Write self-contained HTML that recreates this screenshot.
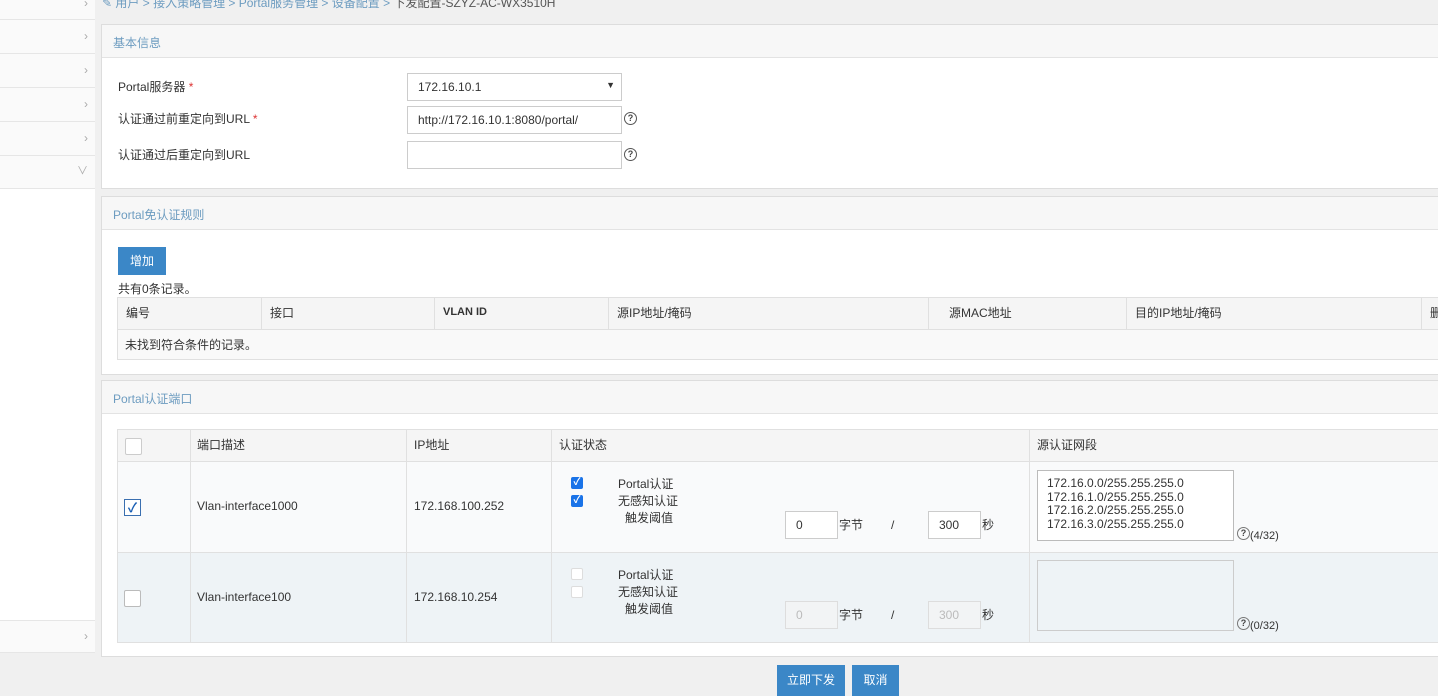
<!DOCTYPE html>
<html><head><meta charset="utf-8"><style>
*{margin:0;padding:0;box-sizing:border-box}
body{width:1438px;height:696px;overflow:hidden;background:#f0f0f0;font-family:"Liberation Sans","Noto Sans CJK SC",sans-serif;font-size:12px;color:#333;position:relative}
.a{position:absolute}
.row{left:0;width:95px;height:34px;background:#fafafa;border-bottom:1px solid #e6e6e6}
.chev{position:absolute;right:7px;top:10px;color:#aaa;font-size:12px}
.panel{background:#fff;border:1px solid #ddd;left:101px;width:1345px}
.ph{position:absolute;left:0;right:0;top:0;height:33px;background:#f7f7f7;border-bottom:1px solid #e3e3e3;color:#6d9cc0;font-size:12px;padding:9px 11px}
.lbl{font-size:12px;color:#333}
.inp{background:#fff;border:1px solid #ccc;height:28px;font-size:12px;padding:6px 10px;color:#333}
.q{width:13px;height:13px;border:1px solid #555;border-radius:50%;font-size:9px;line-height:11px;text-align:center;color:#444;font-weight:bold}
.btn{background:#3b87c7;color:#fff;text-align:center;font-size:12px}
.th{background:#f5f5f5;border:1px solid #e0e0e0;height:33px}
.cl{position:absolute;top:0;bottom:0;border-left:1px solid #e0e0e0}
.cb{width:14px;height:14px;border:1px solid #aaa;background:#fff;border-radius:2px}
.cbb{width:12px;height:12px;background:#1a73e8;border-radius:2px;color:#fff;font-size:10px;line-height:12px;text-align:center;font-weight:bold}
</style></head><body>
<div class="a" style="left:0;top:0;width:95px;height:652px;background:#fff"></div>
<div class="a row" style="top:-14px"><span class="chev">&#8250;</span></div>
<div class="a row" style="top:20px;"><span class="chev" style="top:9px">&#8250;</span></div>
<div class="a row" style="top:54px"><span class="chev" style="top:9px">&#8250;</span></div>
<div class="a row" style="top:88px"><span class="chev" style="top:9px">&#8250;</span></div>
<div class="a row" style="top:122px"><span class="chev" style="top:9px">&#8250;</span></div>
<div class="a row" style="top:155px;border-top:1px solid #e6e6e6"><span class="chev" style="top:6px;font-size:11px">&#8744;</span></div>
<div class="a row" style="top:620px;height:33px;border-top:1px solid #e6e6e6"><span class="chev" style="top:8px">&#8250;</span></div>

<div class="a" style="left:102px;top:-6px;color:#6d9cc0;font-size:12px">&#9998; 用户 &gt; 接入策略管理 &gt; Portal服务管理 &gt; 设备配置 &gt; <span style="color:#555">下发配置-SZYZ-AC-WX3510H</span></div>

<div class="a panel" style="top:24px;height:165px">
<div class="ph">基本信息</div>
<div class="a lbl" style="left:16px;top:53px">Portal服务器 <span style="color:#d33">*</span></div>
<div class="a lbl" style="left:16px;top:85px">认证通过前重定向到URL <span style="color:#d33">*</span></div>
<div class="a lbl" style="left:16px;top:121px">认证通过后重定向到URL</div>
<div class="a inp" style="left:305px;top:48px;width:215px">172.16.10.1<span style="position:absolute;right:6px;top:6px;font-size:9px">&#9660;</span></div>
<div class="a inp" style="left:305px;top:81px;width:215px">http://172.16.10.1:8080/portal/</div>
<div class="a q" style="left:522px;top:87px">?</div>
<div class="a inp" style="left:305px;top:116px;width:215px"></div>
<div class="a q" style="left:522px;top:123px">?</div>
</div>

<div class="a panel" style="top:196px;height:179px">
<div class="ph">Portal免认证规则</div>
<div class="a btn" style="left:16px;top:50px;width:48px;height:28px;line-height:28px">增加</div>
<div class="a lbl" style="left:16px;top:83px">共有0条记录。</div>
<div class="a th" style="left:15px;top:100px;width:1330px">
<div class="cl" style="left:143px"></div><div class="cl" style="left:316px"></div><div class="cl" style="left:490px"></div><div class="cl" style="left:810px"></div><div class="cl" style="left:1008px"></div><div class="cl" style="left:1303px"></div>
<span class="a" style="left:8px;top:6px">编号</span><span class="a" style="left:152px;top:6px">接口</span><span class="a" style="left:325px;top:8px;font-size:11px;font-weight:bold">VLAN ID</span><span class="a" style="left:499px;top:6px">源IP地址/掩码</span><span class="a" style="left:831px;top:6px">源MAC地址</span><span class="a" style="left:1017px;top:6px">目的IP地址/掩码</span><span class="a" style="left:1312px;top:6px">删</span>
</div>
<div class="a" style="left:15px;top:133px;width:1330px;height:30px;background:#f9f9f9;border:1px solid #e0e0e0;border-top:0;padding:6px 7px">未找到符合条件的记录。</div>
</div>

<div class="a panel" style="top:380px;height:277px">
<div class="ph">Portal认证端口</div>
<div class="a th" style="left:15px;top:48px;width:1330px">
<div class="cl" style="left:72px"></div><div class="cl" style="left:288px"></div><div class="cl" style="left:433px"></div><div class="cl" style="left:911px"></div>
<div class="a cb" style="left:7px;top:8px;width:17px;height:17px;border-color:#ccc"></div>
<span class="a" style="left:79px;top:6px">端口描述</span><span class="a" style="left:296px;top:6px">IP地址</span><span class="a" style="left:441px;top:6px">认证状态</span><span class="a" style="left:919px;top:6px">源认证网段</span>
</div>
<div class="a" style="left:15px;top:81px;width:1330px;height:91px;background:#f9fafb;border:1px solid #e0e0e0;border-top:0">
<div class="cl" style="left:72px"></div><div class="cl" style="left:288px"></div><div class="cl" style="left:433px"></div><div class="cl" style="left:911px"></div>
<div class="a" style="left:6px;top:37px;width:17px;height:17px;border:1px solid #3a6fb0;background:#fff;color:#1a5fb4;font-size:13px;line-height:15px;text-align:center;font-weight:bold">&#10003;</div>
<span class="a" style="left:79px;top:37px">Vlan-interface1000</span>
<span class="a" style="left:296px;top:37px">172.168.100.252</span>
<div class="a cbb" style="left:453px;top:15px">&#10003;</div><div class="a cbb" style="left:453px;top:33px">&#10003;</div>
<span class="a" style="left:500px;top:13px">Portal认证</span><span class="a" style="left:500px;top:30px">无感知认证</span><span class="a" style="left:507px;top:47px">触发阈值</span>
<div class="a inp" style="left:667px;top:49px;width:53px;height:28px">0</div><span class="a" style="left:721px;top:54px">字节</span><span class="a" style="left:773px;top:56px">/</span>
<div class="a inp" style="left:810px;top:49px;width:53px;height:28px">300</div><span class="a" style="left:864px;top:54px">秒</span>
<div class="a" style="left:919px;top:8px;width:197px;height:71px;background:#fff;border:1px solid #bbb;padding:6px 9px;line-height:13.5px;font-size:12px">172.16.0.0/255.255.255.0<br>172.16.1.0/255.255.255.0<br>172.16.2.0/255.255.255.0<br>172.16.3.0/255.255.255.0</div>
<div class="a q" style="left:1119px;top:65px;border-color:#777">?</div><span class="a" style="left:1132px;top:68px;font-size:11px">(4/32)</span>
</div>
<div class="a" style="left:15px;top:172px;width:1330px;height:90px;background:#eef3f6;border:1px solid #e0e0e0;border-top:0">
<div class="cl" style="left:72px"></div><div class="cl" style="left:288px"></div><div class="cl" style="left:433px"></div><div class="cl" style="left:911px"></div>
<div class="a cb" style="left:6px;top:37px;width:17px;height:17px;border-color:#bbb"></div>
<span class="a" style="left:79px;top:37px">Vlan-interface100</span>
<span class="a" style="left:296px;top:37px">172.168.10.254</span>
<div class="a cb" style="left:453px;top:15px;width:12px;height:12px;border-color:#ddd"></div><div class="a cb" style="left:453px;top:33px;width:12px;height:12px;border-color:#ddd"></div>
<span class="a" style="left:500px;top:13px">Portal认证</span><span class="a" style="left:500px;top:30px">无感知认证</span><span class="a" style="left:507px;top:47px">触发阈值</span>
<div class="a inp" style="left:667px;top:48px;width:53px;height:28px;background:#f2f4f5;border-color:#ddd;color:#bbb">0</div><span class="a" style="left:721px;top:53px">字节</span><span class="a" style="left:773px;top:55px">/</span>
<div class="a inp" style="left:810px;top:48px;width:53px;height:28px;background:#f2f4f5;border-color:#ddd;color:#bbb">300</div><span class="a" style="left:864px;top:53px">秒</span>
<div class="a" style="left:919px;top:7px;width:197px;height:71px;background:#eef3f6;border:1px solid #ccc"></div>
<div class="a q" style="left:1119px;top:64px;border-color:#777">?</div><span class="a" style="left:1132px;top:67px;font-size:11px">(0/32)</span>
</div>
</div>

<div class="a btn" style="left:777px;top:665px;width:68px;height:31px;line-height:31px">立即下发</div>
<div class="a btn" style="left:852px;top:665px;width:47px;height:31px;line-height:31px">取消</div>
</body></html>
